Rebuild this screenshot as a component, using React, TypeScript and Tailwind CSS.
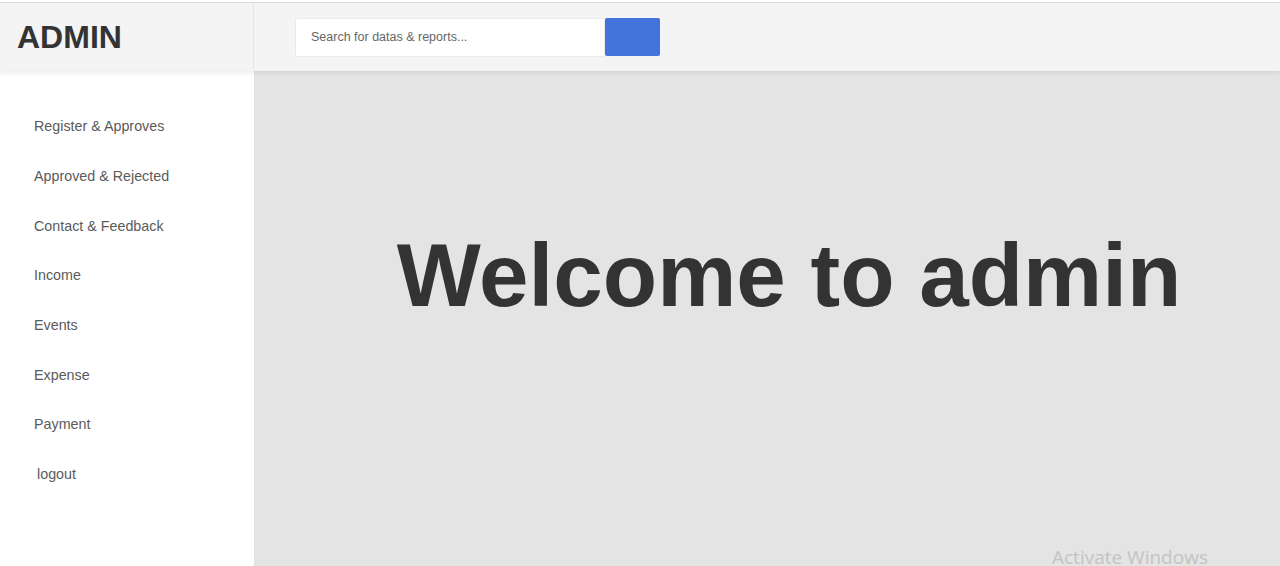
const menu = [
  'Register & Approves',
  'Approved & Rejected',
  'Contact & Feedback',
  'Income',
  'Events',
  'Expense',
  'Payment',
];

export default function App() {
  return (
    <div className="relative h-[566px] w-[1280px] overflow-hidden bg-white font-['Liberation_Sans',Arial,sans-serif]">
      <div className="h-[2px] bg-white" />
      {/* top bar */}
      <div className="relative z-10 flex h-[69px] border-t border-[#dcdcdc] bg-[#f4f4f4] shadow-[0_2px_4px_rgba(0,0,0,0.08)]">
        <div className="flex w-[254px] items-center border-r border-[#e6e6e6] pl-[17px]">
          <span className="text-[32px] font-bold leading-none text-[#333]">ADMIN</span>
        </div>
        <div className="flex flex-1 items-center pl-[41px]">
          <div className="flex h-[39px] items-center">
            <input
              className="h-[39px] w-[310px] rounded-l-[2px] border border-[#eaeaea] bg-white pl-[15px] text-[12.5px] text-[#555] outline-none placeholder:text-[#666]"
              placeholder="Search for datas & reports..."
            />
            <button className="h-[38px] w-[55px] rounded-[2px] bg-[#4374db]" />
          </div>
        </div>
      </div>

      <div className="flex h-[495px]">
        {/* sidebar */}
        <nav className="w-[254px] bg-white pt-[31px]">
          <ul className="flex flex-col">
            {menu.map((m) => (
              <li key={m} className="flex h-[49.7px] items-center pl-[34px] text-[14.3px] text-[#5a5a5a]">
                {m}
              </li>
            ))}
            <li className="flex h-[49.7px] items-center pl-[37px] text-[14.3px] text-[#5a5a5a]">logout</li>
          </ul>
        </nav>

        {/* main */}
        <main className="flex flex-1 justify-center bg-[#e4e4e4] pt-[160px] pl-[44px]">
          <h1 className="text-[89px] font-bold leading-none text-[#333]">Welcome to admin</h1>
        </main>
      </div>

      <div className="absolute left-[1052px] top-[543px] font-['Open_Sans',sans-serif] text-[19px] text-[#c3c3c3]">
        Activate Windows
      </div>
    </div>
  );
}
